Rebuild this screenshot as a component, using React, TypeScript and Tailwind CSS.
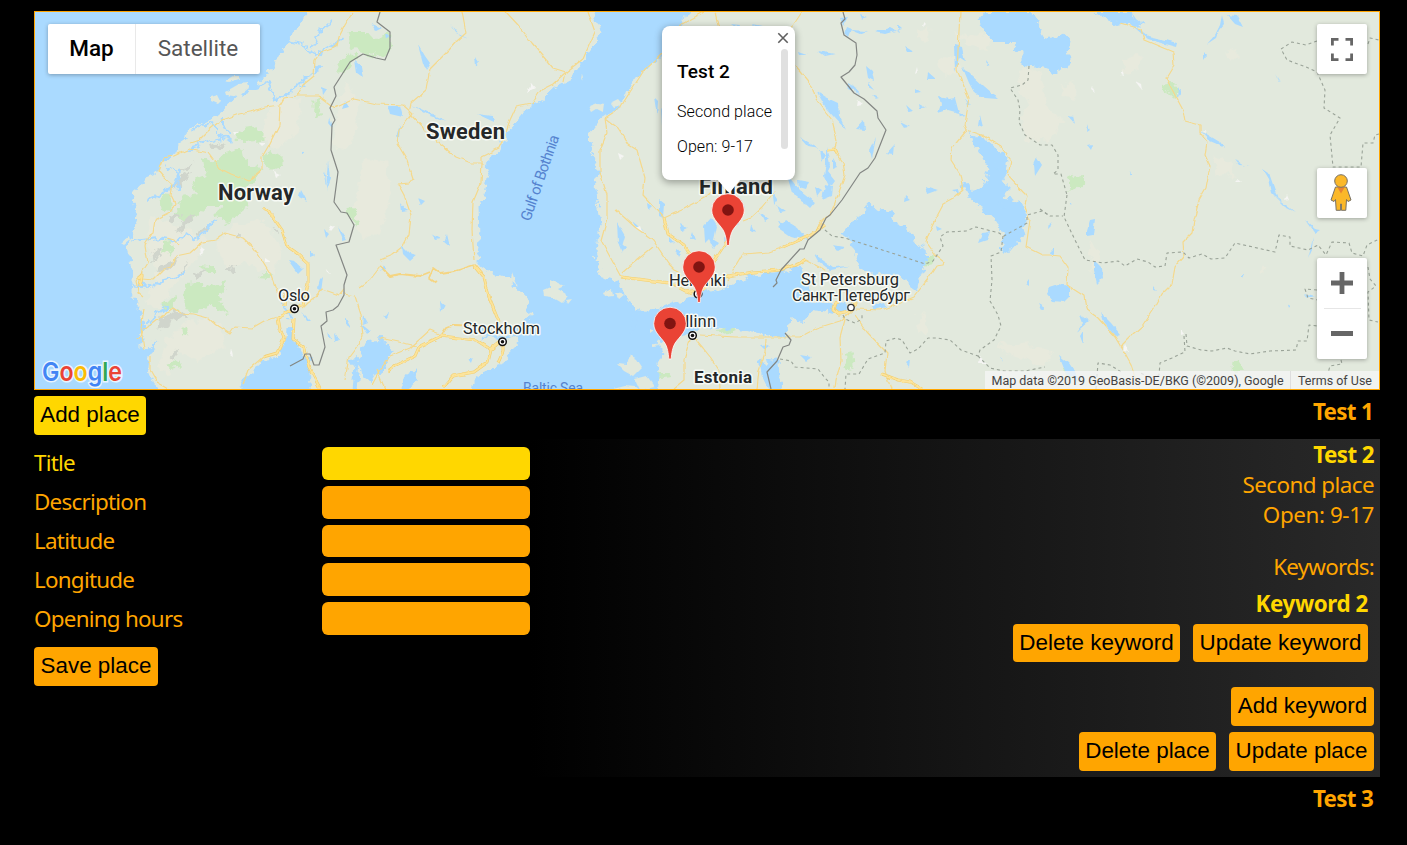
import React from "react";

const SEA = [
  "M20 0H318L297 23L287 40L277 57L262 78L247 92L233 98L223 108L212 118L201 122L187 127L185 138L178 143L176 150L160 160L155 172L143 177L138 187L130 193L135 215L133 228L130 238L125 252L132 268L130 292L138 308L142 328L137 345L145 349L156 338L148 355L147 368L153 382L158 400H20Z",
  "M233 400L243 377L263 358L277 356L284 342L285 328L291 322L292 342L307 358L309 382L313 400Z",
  "M588 0L600 33L583 57L570 78L552 87L543 97L520 113L507 130L497 150L483 163L487 173L482 197L477 205L478 238L475 262L490 272L507 275L523 295L530 315L513 325L518 342L507 352L497 368L487 368L473 378L467 400H655L658 375L657 362L663 352L657 342L670 336L688 333L699 326L720 327L737 328L763 334L785 337L788 318L800 322L813 308L833 311L845 310L845 303L833 302L812 302L807 282L800 265L790 267L780 271L753 273L727 285L700 292L683 298L657 308L640 310L627 302L617 280L600 275L593 252L600 222L593 187L597 167L590 147L588 133L600 117L617 107L623 93L637 73L657 60L663 53L682 27L687 0Z",
  "M983 10L978 20L990 43L1010 43L1020 53V63L1050 68L1053 74L1062 66L1070 63L1067 50L1069 40L1062 33L1047 38L1040 28L1033 17L1028 10Z",
  "M1094 10L1104 18L1115 24L1124 22L1138 25L1142 24L1128 12L1122 10Z",
  "M867 202L861 214L852 218L847 226L838 232L850 240L848 246L856 256L860 268L870 273L900 275L912 286L914 293L917 282L925 263L924 247L913 242L912 234L897 225L891 213L882 208L875 210Z",
  "M967 130L984 139L998 148L1006 160L1002 174L1007 187L1003 196L1021 203L1025 216L1027 222L1019 238L1007 252L999 250L1003 235L990 215L978 207L967 196L959 184L965 183L975 190L982 187L987 168L978 150Z",
  "M757 362L768 359L778 360L779 378L781 390H768L761 375Z",
  "M363 339L380 338L390 348L386 366L377 372L371 382L362 376L358 360L355 390L350 390L352 365L347 357L358 356Z",
  "M400 389L405 374L416 367L413 381L407 390Z",
];

const LAKES = [
  "M1049 287L1058 284L1069 286V297L1064 302L1053 301L1047 294Z",
  "M1087 230L1090 220L1095 219L1093 235L1087 236Z",
  "M1094 260L1102 268L1103 278L1097 284L1094 270Z",
  "M1100 312L1111 323L1120 334L1115 336L1103 322Z",
  "M1059 355L1069 363L1075 372L1081 382L1067 375Z",
  "M962 66L971 75L984 87L998 99L985 98L975 94L969 83Z",
  "M939 97L949 99L955 98L959 113L948 110L938 113L941 104Z",
  "M954 45L962 47L965 62L959 58L955 72Z",
  "M890 28L900 33L896 24L902 29L885 34L875 32Z M866 66L872 71L874 81L868 78Z M852 84L861 94L855 92Z",
  "M817 92L825 97L838 103L839 115L846 130L833 116L826 108Z",
  "M800 137L813 145L820 148L808 146Z M826 146L830 165L827 171L835 181L830 188L824 176L826 163Z M787 175L800 190L815 202L810 208L797 196L792 193Z",
  "M825 185L833 187L832 196L822 200Z M778 221L793 225L802 236L795 238L783 229Z",
  "M711 218L717 226L714 240L719 243L714 249L709 239L705 243L704 226Z M724 238L729 241L725 248Z",
  "M659 200L664 204L663 218L659 216Z M617 222L625 236L621 250L618 242Z",
  "M617 241L626 247L624 250Z M632 221L644 231L635 226Z",
  "M618 242L624 247L623 252Z",
  "M418 44L425 56L430 63L426 70L423 63Z M475 57L479 63L476 67Z M450 24L460 36L469 39L456 33Z",
  "M412 105L432 114L447 121L430 116Z M388 106L400 106L403 117L390 114Z M400 125L399 140L396 136Z M477 114L493 116L494 122Z",
  "M402 246L409 253L417 255L410 261L403 254Z M431 234L440 239L435 240Z M384 265L386 269L381 272Z M440 301L445 305L441 312Z",
  "M467 359L472 357L470 363Z M463 321L490 330L495 337L484 335Z",
  "M400 203L407 211L401 212Z M418 198L425 201L421 205Z M447 234L450 247L444 242Z M383 316L389 313L387 318Z",
  "M288 260L294 261L303 269L298 274Z M310 250L315 256L310 258Z M324 229L329 234L326 238Z M338 226L347 240L343 241Z M301 190L307 201L299 197Z",
  "M327 192L324 175L330 155L325 172Z M328 160L330 178L326 189Z M302 152L305 154L302 155Z",
  "M355 60L362 66L364 78L357 73Z M322 87L327 89L323 95Z M345 101L349 107L342 109Z M330 117L333 128L329 123Z",
  "M372 24L382 28L376 31Z M385 34L391 37L386 40Z M345 317L351 328L345 324Z M360 323L370 331L367 334Z M334 333L339 340L335 342Z",
  "M320 280L323 277L321 292L318 287Z M302 312L310 320L307 320Z M327 330L332 340L328 337Z M364 316L368 323L363 325Z",
  "M864 120L865 130L856 129Z M900 122L910 127L904 128Z M840 18L848 17L843 26Z M850 30L868 31L860 34Z M848 83L856 88L849 90Z",
  "M906 105L913 111L909 112Z M928 73L936 80L927 80Z M919 103L926 107L920 109Z M986 60L990 65L987 66Z M1037 157L1042 165L1035 176L1034 164Z",
  "M925 186L938 190L927 194Z M958 189L952 190L959 194Z M980 115L983 127L978 125Z M876 138L870 150L872 158Z M894 145L893 155L886 154Z",
  "M1123 18L1134 25L1148 36L1166 40L1177 43L1176 47L1161 43L1148 39Z M1132 13L1140 25L1135 23Z M1222 15L1224 24L1219 30L1216 38L1207 44L1215 35L1220 25Z",
  "M1178 87L1181 93L1177 98Z M1227 15L1237 16L1243 27L1235 24Z M1067 115L1073 116L1075 124Z M1088 125L1090 131L1087 133Z M1093 145L1091 150L1088 146Z",
  "M1200 130L1223 144L1226 148L1210 141Z M1235 160L1244 166L1250 166L1239 165Z M1263 169L1269 173L1278 199L1272 193L1269 179Z M1130 170L1132 175L1129 174Z",
  "M1273 195L1295 212L1285 207Z M1305 220L1315 229L1321 230L1315 234Z M1313 238L1312 249L1308 258Z M1275 74L1280 82L1278 80Z M1203 52L1206 56L1203 60Z",
  "M1080 315L1089 321L1081 328L1076 333L1083 323Z M1050 222L1052 226L1049 229Z M1083 331L1083 344L1080 336Z M1055 247L1055 255L1050 252Z",
  "M1069 202L1072 203L1071 205Z M1154 287L1157 291L1154 290Z M1244 275L1242 279L1242 275Z M1290 305L1288 309L1287 306Z M1305 294L1316 297L1308 297Z",
  "M833 245L845 247L838 251Z M814 254L826 262L833 267L850 266L830 270L818 261Z M760 213L768 219L764 222Z M785 220L798 228L807 240L790 236L778 228Z",
  "M990 232L987 240L978 243L982 233Z M905 196L910 200L904 202Z M871 305L884 302L886 307L874 310Z M936 226L942 229L937 231Z M1030 280L1030 286L1027 284Z",
  "M800 355L812 357L806 361Z M906 363L910 360L909 367Z M1004 363L999 355L1003 360Z M760 346L770 345L764 350Z M1038 304L1045 308L1041 310Z",
  "M630 335L637 325L640 308L633 314Z M654 97L658 101L657 116Z M655 30L659 38L656 50Z M661 107L665 118L662 125Z",
  "M752 24L762 26L757 31Z M731 24L740 25L738 29Z M798 52L807 55L799 55Z M818 51L835 54L825 56Z M859 14L867 17L861 19Z",
  "M846 27L851 29L848 37L844 33Z M868 83L874 90L868 87Z M872 95L880 98L876 99Z M904 46L914 52L907 52Z M915 88L921 92L915 93Z",
  "M798 180L809 182L806 189L799 187Z M820 150L826 155L822 162Z M815 186L822 190L817 197Z M833 158L838 166L833 168Z M801 194L806 205L801 202Z",
  "M772 189L778 198L774 204Z M776 205L786 212L779 213Z M740 198L745 206L739 210Z M752 224L756 232L751 230Z M735 218L740 224L735 227Z",
  "M680 224L688 228L682 231Z M669 237L674 243L669 244Z M692 232L695 240L690 238Z M647 203L652 206L648 210Z M676 250L682 252L679 257Z",
  "M965 99L972 105L967 107Z M959 113L966 116L960 117Z M995 160L999 172L993 166Z M1000 200L1006 210L998 207Z M992 93L997 96L991 98Z",
];

const FJORDS = [
  "M253 85L267 82L275 98L290 91L308 73L320 65",
  "M190 129L210 121L219 135L231 140M219 118L228 134",
  "M132 240L157 237L175 240L184 233L192 239L205 229L212 219",
  "M131 283L147 286L163 279L177 276L182 269M145 325L155 313L168 304",
  "M145 200L160 193L174 183L178 167M165 163L178 174L176 190",
  "M184 148L207 141L225 137M285 40L302 43L314 55L330 45L342 37",
  "M293 320L287 313L281 304M330 20L318 31L310 46",
  "M480 337L490 333L503 338L515 333",
];

const ISLANDS = [
  "M211 97L218 95L221 101L218 104L211 101Z",
  "M225 92L239 84L247 83L249 88L238 97L226 95Z",
  "M225 81L233 76L238 76L239 79L229 82Z",
  "M543 290L550 287L550 279L564 286L558 289L569 296L562 303L552 297L544 296Z",
  "M566 300L572 299L568 304Z",
  "M617 364L627 365L630 355L637 359L642 367L633 376L624 371Z",
  "M603 293L612 289L613 296L605 297Z M615 293L625 295L619 300Z",
  "M589 106L597 103L604 104L603 112L597 109L592 112Z M610 103L618 99L623 105L613 107Z",
  "M613 388L625 385L635 386L640 390H620Z M635 379L647 376L655 387L640 390Z",
  "M121 243L129 236L130 240L124 245Z M582 74L584 81L581 79Z M512 273L517 287L511 280Z",
  "M650 328L654 330L650 333Z M653 344L659 346L653 347Z",
];

const GREEN = [
  "M238 130L257 127L262 133L262 141L243 143L236 136Z",
  "M200 156L215 160L222 153L240 148L242 158L262 168L255 180L240 189L248 205L226 222L213 217L222 205L205 205L185 222L172 215L182 196L196 193L189 180L203 174Z",
  "M267 151L281 154L281 165L270 170L262 158Z",
  "M182 283L201 282L211 286L222 280L223 289L218 298L228 311L219 313L210 303L196 311L184 309L181 296Z",
  "M312 101L317 99L321 115L315 118L312 108Z M347 31L366 31L376 42L373 55L352 48Z M334 65L347 52L356 54L344 71L334 72Z",
  "M345 207L353 206L356 224L348 219Z M160 241L169 240L171 255L163 250Z M259 272L268 272L268 278L258 277Z M197 264L209 265L217 272L207 272Z",
  "M372 40L388 31L391 47L384 57L372 53Z M161 302L173 296L175 308L163 308Z M179 328L187 324L187 332L180 336Z M165 364L181 359L179 367L169 369Z",
  "M1160 84L1172 82L1177 88L1176 95L1164 91Z M1067 176L1074 173L1084 180L1077 187L1068 190Z",
  "M844 353L852 351L853 365L846 370L843 363Z M921 257L931 255L932 262L923 264Z M715 329L729 326L736 331L721 334Z",
  "M1231 362L1236 358L1243 370L1230 370Z M1062 368L1072 371L1073 380L1062 375Z M657 372L666 372L671 376L659 377Z",
  "M158 194L170 195L170 211L159 209Z",
];

const BEIGE = [
  "M230 225L260 220L280 245L272 275L245 262L226 270L215 245Z",
  "M150 215L180 225L205 240L190 265L168 290L158 310L145 300L156 270L146 250Z",
  "M270 100L300 95L296 130L276 148L260 140Z M344 79L358 106L350 145L333 150L334 120Z",
  "M186 320L220 322L224 345L195 361L178 349L164 377L157 365L164 340Z",
  "M362 158L385 160L388 200L380 230L362 240L353 220L356 185Z",
  "M917 27L929 29L926 41L916 37Z M952 30L975 36L990 30L985 50L967 43Z M935 61L955 55L960 70L945 75Z M1020 66L1040 72L1045 105L1062 120L1048 140L1024 138L1020 115L1030 103L1018 90Z",
  "M1120 60L1135 53L1140 58L1136 70L1123 72Z M1058 86L1073 79L1074 98L1063 95Z M1225 50L1232 47L1238 58L1227 57Z M1210 155L1230 160L1233 177L1215 173Z",
  "M995 342L1025 344L1050 351L1043 366L1004 352Z M916 315L925 312L924 333L918 334Z M1089 240L1096 248L1098 262L1089 270Z M1259 265L1264 267L1261 272Z",
];

const HILLS = [
  "M167 190L181 174L191 171L180 183Z M174 232L186 215L194 213L180 229Z M150 252L164 246L151 263Z",
  "M208 146L221 141L227 144L211 149Z M155 268L177 256L170 267L157 272Z M198 228L209 225L195 235Z",
  "M231 236L238 231L242 237Z M175 172L193 161L187 169Z M159 316L174 310L188 315L171 321L157 330Z",
  "M193 271L206 269L197 277Z M223 270L233 265L230 272Z M168 216L176 212L181 215L167 221Z",
  "M271 227L278 229L276 233Z M168 357L178 347L172 360Z M178 271L188 258L181 273Z",
];

const SNOW = [
  "M259 143L266 143L262 146Z M233 132L239 132L235 135Z M274 171L281 174L276 177Z M200 248L204 251L201 256Z",
  "M231 348L233 357L230 355Z M329 227L335 226L331 231Z M326 267L331 273L328 272Z M265 258L271 262L265 262Z",
  "M531 83L535 88L527 92Z M618 153L624 156L620 160Z M857 100L863 105L856 106Z M924 22L926 24L923 27Z M917 67L918 72L915 74Z",
  "M1092 86L1095 92L1091 89Z M1122 70L1124 76L1120 75Z M1135 81L1141 84L1142 90Z M1204 130L1207 132L1201 131Z M1238 179L1242 182L1235 182Z",
  "M1125 344L1129 352L1123 351Z M1181 330L1184 334L1181 335Z M1287 194L1289 199L1285 200Z M980 357L988 363L979 363Z M640 226L642 231L635 228Z",
];

const ROADS = [
  "M353 12L345 25L339 37L337 46L321 52L315 60L314 76L303 85L297 96L284 98L280 105L265 107L254 111L239 114L220 121L207 132L199 140L190 143M280 105L279 125L269 145L262 157L262 170L249 181L231 174L219 168L208 153L189 149L174 156L163 158L158 170L163 176L173 185L171 195L175 203L171 212L155 220L153 232L145 245L148 263L139 277L136 281",
  "M297 96L319 96L335 108L354 99L376 104L403 105L412 113L407 120L399 130L397 143L407 160L413 178L409 183L398 184L404 195L411 215L409 235L403 246L392 255L380 260",
  "M462 12L466 33L457 41L449 50L430 69L426 90L411 103L409 113M409 113L425 130L441 145L456 157L471 163L482 163M482 163L481 183L473 202L472 230L474 260",
  "M481 163L481 157L499 148L504 137L510 120L516 107L532 104L541 90L553 84L566 72L583 59L595 32L588 12M566 72L564 82M506 12L519 26L532 43L543 56L553 68L566 72",
  "M682 24L704 12M682 22L663 53L643 72L630 92L620 108L605 118M605 118L607 133L600 150L600 172L607 195L607 218L601 240L609 255L621 277",
  "M605 118L618 128L629 145L637 150L645 178L643 195L659 212L664 218M616 210L636 228L653 240L669 264L681 276M653 247L631 265L622 273M664 218L684 209L706 197L724 180",
  "M715 12L720 34L710 60M802 12L790 30L778 45L795 66L812 86L816 99L832 120L837 140L834 150L843 162L845 175L838 195L831 213L820 223",
  "M960 12L957 70L969 98L965 125L967 130L952 148L951 160L960 174L963 190L955 197L944 203L935 220L928 235L926 242L936 256L944 262L943 265L936 266L927 280L914 297L896 305L881 310L856 309",
  "M967 130L982 135L1000 146L1011 160L1008 176L1023 192L1028 197L1025 207L1030 220L1026 247L1042 255L1050 255L1060 256L1068 267L1067 285L1084 296L1086 309L1098 318L1115 337L1121 347L1131 365L1139 389",
  "M1120 23L1141 29L1144 40L1173 52L1174 65L1166 78L1176 97L1183 110L1185 121L1200 125L1200 133L1207 142L1205 155L1210 166L1206 188L1199 200L1194 220L1192 233L1183 242L1184 257L1175 267L1172 284L1162 294L1156 305L1142 326L1134 333L1120 347",
  "M763 207L775 192L773 195M743 221L751 218L763 207M727 281L743 254L770 252L784 247L811 236L825 220",
  "M806 260L819 267L829 274L839 282L852 301M700 335L735 337L763 337L800 337L817 328L840 321L849 314M855 315L867 332L887 353L885 371L891 389M846 315L840 337L841 361L836 380L835 389",
  "M692 335L703 348L711 358L719 370L720 389M766 339L765 353L759 370L757 389M690 340L684 360L684 380L673 389",
  "M136 281L138 292L144 297M142 278L154 279L164 269L172 267L176 256L190 253L202 242L216 240L225 233L243 238L254 248L260 257L270 273L275 287L282 301",
  "M138 340L144 330L157 320L173 308L181 313L193 314L208 318L216 325L230 334L235 327L252 328L264 321L278 317",
  "M144 310L141 328L144 350M150 355L150 370L157 382L169 389M243 384L248 370L263 357M302 308L308 302L315 297L322 289L339 295L344 289M360 287L370 280L380 267M345 294L355 296L361 315L363 337L358 345L349 357L345 380",
  "M380 338L417 346M440 334L430 330L410 348L390 356L380 370L372 385M178 245L174 240L167 238M385 389L377 370",
];

const HIGHWAYS = [
  "M262 207L273 217L282 230L287 246L298 254L308 263L308 285L303 304L294 309M294 309L278 318L280 329L284 338L277 353L263 357M294 318L293 339L305 348L309 368L320 388",
  "M474 265L484 277L490 300L499 322M502 341L491 350L488 362L474 372L453 376L443 388M500 341L490 349L476 340L441 336L419 347L415 356L396 365L388 371M503 344L503 352L498 363",
  "M621 277L645 280L670 283L691 294M664 218L668 234L684 245L697 266L694 282M728 276L753 272L780 270L801 263L806 260M728 276L710 283L702 290M700 290L685 292M784 247L811 235L825 225",
  "M727 241L715 259L707 270L701 278M882 374L898 380L910 382L922 389M284 306L285 292M137 279L142 275L140 287M834 303L839 302M835 303L833 309L839 314L850 312L855 304L848 297M827 150L835 149L837 153",
];

const SECONDARY = [
  "M474 265L455 271L440 273L433 268L429 278L436 283M441 336L446 328L454 325L480 326M430 272L420 276L400 274L390 276L380 266",
];

const BORDERS = [
  "M380 12L377 22L390 32V48L385 60L376 58L363 54L350 62L334 87L336 96L330 108L335 120L332 125L331 150L338 172L334 202L341 212L347 213L354 225L349 242L336 245L347 275L344 285V295L338 306L333 310L326 312L327 321L321 326L325 347L319 365L314 365L310 354L305 354L303 359L290 366",
  "M843 12L845 19L841 23L844 35L856 43L857 55L855 65L849 72L841 77L854 93L864 99L877 111L878 118L886 130L875 158L868 168L860 173L842 200L830 215L826 218L820 230L808 240L804 249L800 249L781 270L776 280L777 283L773 287M785 333L791 340L789 345L783 347L777 361L767 372L771 389",
];

const DOTTED = [
  "M1029 66L1028 80L1022 85L1010 88L1018 100L1020 110L1019 122L1025 135L1040 145L1052 145L1058 155L1058 170L1053 174L1061 174L1067 195M1040 209L1050 216L1063 216M1067 195L1064 217L1075 240L1085 260L1103 263L1118 261L1125 266L1137 259L1148 262L1155 267L1165 266L1167 253L1183 252L1189 258L1202 254L1211 259L1225 258L1235 243L1275 252L1279 235L1290 237V246L1308 250L1318 245L1326 255L1332 242L1349 243L1352 253L1363 256L1367 245L1379 239",
  "M825 230L832 236L845 238L870 246L898 255L925 264L933 261L943 246L940 237L947 232L966 231L976 227L999 233L1004 236L1027 223V215L1042 211L1050 216M1003 236L1001 252L991 256L992 280L990 301L998 315L1001 326L994 340L980 350L978 356L961 350L950 340L937 338L928 338L918 349L910 353L902 340L896 338L886 341L885 353L868 359L859 374L846 374L845 389",
  "M780 359L791 361L795 367L818 369L825 378L829 382L829 388M978 356L990 368L1004 371L1025 371L1045 367M843 315L845 319L855 323L862 319L862 314",
  "M1317 41L1306 45L1292 42L1281 49L1287 60L1306 67L1317 72L1325 90L1324 108L1340 118L1330 135L1333 167L1361 167L1363 143L1373 143L1375 135L1379 134M1368 44L1370 38L1379 40",
  "M1186 334L1187 346L1201 350L1212 351L1227 348L1235 351L1250 354L1270 351L1296 350L1298 341L1307 341L1309 325L1318 326M1184 336L1185 352L1172 358L1160 363L1159 375L1150 378L1139 372M1096 389L1098 363L1110 365L1123 373M1368 267L1370 279L1376 286L1368 292L1369 320L1378 322M1341 360L1342 364L1330 366L1328 373M1317 290L1305 289L1308 298L1318 300",
];

function Paths({ d, fill = "none", stroke, width, dash }: { d: string[]; fill?: string; stroke?: string; width?: number; dash?: string }) {
  return (
    <g fill={fill} stroke={stroke} strokeWidth={width} strokeDasharray={dash} strokeLinejoin="round">
      {d.map((p, i) => (
        <path key={i} d={p} />
      ))}
    </g>
  );
}

function Pin({ x, y }: { x: number; y: number }) {
  return (
    <g transform={`translate(${x} ${y})`}>
      <path
        d="M-1.2 0C-1.4-1-1.4-7-3.7-13C-6.5-20.5-16.3-25.5-16.3-35.5A16.3 16.3 0 0 1 16.3-35.5C16.3-25.5 6.5-20.5 3.7-13C1.4-7 1.4-1 1.2 0Z"
        fill="#ea4335"
        stroke="#fff"
        strokeWidth="0.8"
      />
      <circle cx="0" cy="-35.5" r="5.8" fill="#811411" />
    </g>
  );
}

function Capital({ x, y }: { x: number; y: number }) {
  return (
    <g>
      <circle cx={x} cy={y} r="3.8" fill="#fff" stroke="#111" strokeWidth="1.5" />
      <circle cx={x} cy={y} r="1.8" fill="#111" />
    </g>
  );
}

function MapDrawing() {
  return (
    <svg className="block h-full w-full" viewBox="35 12 1344 377" fontFamily="Roboto, sans-serif">
      <defs>
        <filter id="coast" filterUnits="userSpaceOnUse" x="15" y="-5" width="1380" height="410">
          <feTurbulence type="fractalNoise" baseFrequency="0.13" numOctaves="3" seed="7" result="n" />
          <feDisplacementMap in="SourceGraphic" in2="n" scale="11" xChannelSelector="R" yChannelSelector="G" />
        </filter>
        <filter id="rough" filterUnits="userSpaceOnUse" x="15" y="-5" width="1380" height="410">
          <feTurbulence type="fractalNoise" baseFrequency="0.12" numOctaves="2" seed="3" result="n" />
          <feDisplacementMap in="SourceGraphic" in2="n" scale="4" xChannelSelector="R" yChannelSelector="G" />
        </filter>
      </defs>
      <rect x="35" y="12" width="1344" height="377" fill="#e2e9dd" />
      <g filter="url(#coast)" transform="translate(1.5 1)">
        <Paths d={BEIGE} fill="#e8eadd" />
        <Paths d={GREEN} fill="#cbe9c0" />
        <Paths d={HILLS} fill="#d0d5cc" />
        <Paths d={SEA} fill="#aadaff" />
        <Paths d={FJORDS} stroke="#aadaff" width={2.2} />
      </g>
      <g filter="url(#rough)">
        <Paths d={ISLANDS} fill="#e2e9dd" />
        <Paths d={LAKES} fill="#aadaff" />
        <Paths d={SNOW} fill="#f5f5f3" />
        <Paths d={ROADS} stroke="#f5d98c" width={1.2} />
        <Paths d={SECONDARY} stroke="#f5d582" width={1.8} />
        <Paths d={HIGHWAYS} stroke="#f2cf72" width={3} />
        <Paths d={HIGHWAYS} stroke="#fce49b" width={1.8} />
      </g>
      <Paths d={BORDERS} stroke="#838683" width={1.2} />
      <Paths d={DOTTED} stroke="#9aa398" width={1.1} dash="3 3" />

      <g fill="#5583cf" fontSize="15">
        <text transform="translate(530 222) rotate(-71)" textLength="90">Gulf of Bothnia</text>
        <text x="523" y="393" fontSize="14" textLength="60">Baltic Sea</text>
      </g>
      <g fill="#252829" stroke="#f7faf5" strokeWidth="3" strokeLinejoin="round" paintOrder="stroke">
        <g fontWeight="700" fontSize="22">
          <text x="218" y="200" textLength="76">Norway</text>
          <text x="426" y="139" textLength="79">Sweden</text>
          <text x="699" y="194" textLength="74">Finland</text>
          <text x="694" y="383" fontSize="17" textLength="58">Estonia</text>
        </g>
        <g fontSize="16.5">
          <text x="278" y="301" textLength="32">Oslo</text>
          <text x="463" y="334" textLength="77">Stockholm</text>
          <text x="669" y="286" textLength="57">Helsinki</text>
          <text x="667" y="327" textLength="49">Tallinn</text>
          <text x="801" y="285" textLength="98">St Petersburg</text>
          <text x="792" y="300.5" fontSize="16" textLength="118">Санкт-Петербург</text>
        </g>
      </g>
      <Capital x={294.5} y={308.7} />
      <Capital x={502.5} y={341.8} />
      <Capital x={692.5} y={335.5} />
      <Capital x={698} y={294} />
      <circle cx="851" cy="307.5" r="3.2" fill="#fff" stroke="#333" strokeWidth="1.3" />
      <Pin x={728} y={245.5} />
      <Pin x={699} y={302.5} />
      <Pin x={670} y={359} />
      <text x="42" y="380.5" fontFamily="Inter, sans-serif" fontSize="26" fontWeight="600" textLength="80" lengthAdjust="spacingAndGlyphs" stroke="#fff" strokeOpacity="0.75" strokeWidth="3" paintOrder="stroke">
        <tspan fill="#4285f4">G</tspan>
        <tspan fill="#ea4335">o</tspan>
        <tspan fill="#fbbc05">o</tspan>
        <tspan fill="#4285f4">g</tspan>
        <tspan fill="#34a853">l</tspan>
        <tspan fill="#ea4335">e</tspan>
      </text>
    </svg>
  );
}

function MapView() {
  return (
    <div className="relative h-[379px] w-[1346px] overflow-hidden border border-[#ffa500] font-[Roboto,sans-serif]">
      <MapDrawing />

      <div className="absolute top-3 left-[13px] flex h-[50px] w-[212px] rounded-[2px] bg-white text-[22.5px] leading-[49px] shadow-[0_1px_4px_rgba(0,0,0,0.3)]">
        <div className="w-[88px] border-r border-[#e9e9e9] text-center font-medium text-black">Map</div>
        <div className="flex-1 text-center text-[#565656]">Satellite</div>
      </div>

      <div className="absolute top-[14px] left-[626.5px] h-[153.5px] w-[133px] rounded-lg bg-white px-[15.5px] pt-[32px] text-[16px] font-light text-black shadow-[0_2px_7px_1px_rgba(0,0,0,0.3)]">
        <h2 className="text-[19px] leading-7 font-medium tracking-[0.08px] whitespace-nowrap">Test 2</h2>
        <p className="mt-[13px] leading-[26px] tracking-[0.08px] whitespace-nowrap">Second place</p>
        <p className="mt-[9px] leading-[26px] tracking-[0.08px] whitespace-nowrap">Open: 9-17</p>
        <div className="absolute top-[23px] right-[7px] h-[100px] w-[7px] rounded-full bg-[#e0e0e0]" />
        <svg className="absolute top-[5.5px] right-[5.5px]" width="12" height="12" viewBox="0 0 12 12" stroke="#5f5f5f" strokeWidth="1.6">
          <path d="M1.3 1.3L10.7 10.7M10.7 1.3L1.3 10.7" />
        </svg>
        <svg className="absolute top-[153px] left-[55px]" width="24" height="14" viewBox="0 0 24 14">
          <path d="M0 0H24L14 12Q12 14 10 12Z" fill="#fff" />
        </svg>
      </div>
      <svg className="absolute top-[181px] left-[676px]" width="34" height="20" viewBox="711 193 34 20">
        <Pin x={728} y={245.5} />
      </svg>

      <div className="absolute top-3 right-3 flex size-[50px] items-center justify-center rounded-[2px] bg-white shadow-[0_1px_4px_rgba(0,0,0,0.3)]">
        <svg width="22" height="23" viewBox="0 0 22 23" fill="none" stroke="#666" strokeWidth="2.8">
          <path d="M1.4 7.5V1.4H7.5M14.5 1.4H20.6V7.5M20.6 15.5V21.6H14.5M7.5 21.6H1.4V15.5" />
        </svg>
      </div>
      <div className="absolute top-[156px] right-3 flex size-[50px] items-center justify-center rounded-[2px] bg-white shadow-[0_1px_4px_rgba(0,0,0,0.3)]">
        <svg className="-mt-px -ml-0.5" width="22" height="37" viewBox="0 0 22 37" stroke="#777064" strokeWidth="1" strokeLinejoin="round">
          <path d="M5.5 13H16.5L21 26L18 27.5L16.5 25.5L15.8 36.3H11.4V30H10.6V36.3H6.2L5.5 25.5L4 27.5L1 26Z" fill="#fbb829" />
          <path d="M7.3 13.2H14.7L11 19.5Z" fill="#e98332" stroke="none" />
          <circle cx="11" cy="7" r="6.3" fill="#fbb829" />
        </svg>
      </div>
      <div className="absolute top-[246px] right-3 flex h-[101px] w-[50px] flex-col items-center rounded-[2px] bg-white shadow-[0_1px_4px_rgba(0,0,0,0.3)]">
        <div className="flex h-[50px] items-center">
          <svg width="22" height="22" viewBox="0 0 22 22" fill="#666">
            <path d="M8.6 0H13.4V8.6H22V13.4H13.4V22H8.6V13.4H0V8.6H8.6Z" />
          </svg>
        </div>
        <div className="h-px w-[37px] bg-[#e6e6e6]" />
        <div className="flex h-[49px] items-center">
          <div className="h-[5px] w-[22px] bg-[#666]" />
        </div>
      </div>

      <div className="absolute right-0 bottom-0 flex h-[18px] bg-[#f5f5f5]/75 text-[12.5px] leading-[19px] text-[#444]">
        <div className="w-[306px] border-r border-[#dedede] text-center whitespace-nowrap">
          Map data ©2019 GeoBasis-DE/BKG (©2009), Google
        </div>
        <div className="w-[88px] text-center whitespace-nowrap">Terms of Use</div>
      </div>
    </div>
  );
}

function Button({ children, className }: { children: string; className: string }) {
  return (
    <button type="button" className={`flex shrink-0 items-start justify-center rounded-[4px] font-['Liberation_Sans',sans-serif] text-[22.4px] leading-[37px] tracking-normal whitespace-nowrap text-black ${className}`}>
      {children}
    </button>
  );
}

const FIELDS = ["Title", "Description", "Latitude", "Longitude", "Opening hours"];

function PlaceForm() {
  return (
    <div className="flex w-[496px] flex-col items-start pt-[6px]">
      <Button className="h-[39px] w-[112px] bg-[#ffd700]">Add place</Button>
      <div className="mt-3 mb-3 flex flex-col gap-[6px]">
        {FIELDS.map((label, i) => (
          <label key={label} className={i === 0 ? "flex h-[32.8px] items-center text-[#ffd700]" : "flex h-[32.8px] items-center"}>
            <span className="w-[288px] tracking-[-0.75px]">{label}</span>
            <input className={i === 0 ? "h-full w-[208px] rounded-[6px] bg-[#ffd700]" : "h-full w-[208px] rounded-[6px] bg-[#ffa500]"} />
          </label>
        ))}
      </div>
      <Button className="h-[39px] w-[124px] bg-[#ffa500]">Save place</Button>
    </div>
  );
}

function PlaceList() {
  return (
    <div className="flex flex-1 flex-col text-right">
      <h3 className="h-[49px] pt-[7px] pr-[7px] font-bold tracking-[-0.7px]">Test 1</h3>
      <section className="flex h-[338px] flex-col items-end bg-linear-to-r/srgb from-black to-[#292929] pt-px pr-[6px]">
        <h3 className="font-bold tracking-[-0.6px] text-[#ffd700]">Test 2</h3>
        <p>Second place</p>
        <p className="tracking-[-0.4px]">Open: 9-17</p>
        <p className="mt-[22px] tracking-[-0.8px]">Keywords:</p>
        <div className="mt-[7px] flex flex-col items-end pr-[6px]">
          <h4 className="font-bold tracking-[-0.4px] text-[#ffd700]">Keyword 2</h4>
          <div className="mt-[5px] flex gap-[13px]">
            <Button className="h-[38px] w-[167px] bg-[#ffa500]">Delete keyword</Button>
            <Button className="h-[38px] w-[175px] bg-[#ffa500]">Update keyword</Button>
          </div>
        </div>
        <Button className="mt-[25px] h-[39px] w-[143px] bg-[#ffa500]">Add keyword</Button>
        <div className="mt-[6px] flex gap-[13px]">
          <Button className="h-[39px] w-[137px] bg-[#ffa500]">Delete place</Button>
          <Button className="h-[39px] w-[145px] bg-[#ffa500]">Update place</Button>
        </div>
      </section>
      <h3 className="pt-[7px] pr-[7px] font-bold tracking-[-0.7px]">Test 3</h3>
    </div>
  );
}

export default function App() {
  return (
    <main className="h-[845px] overflow-hidden bg-black pt-[11px] pl-[34px] font-['Noto_Sans',sans-serif] text-[22.4px] leading-[30px] tracking-[-0.55px] text-[#ffa500]">
      <div className="tracking-normal">
        <MapView />
      </div>
      <div className="flex w-[1346px]">
        <PlaceForm />
        <PlaceList />
      </div>
    </main>
  );
}
